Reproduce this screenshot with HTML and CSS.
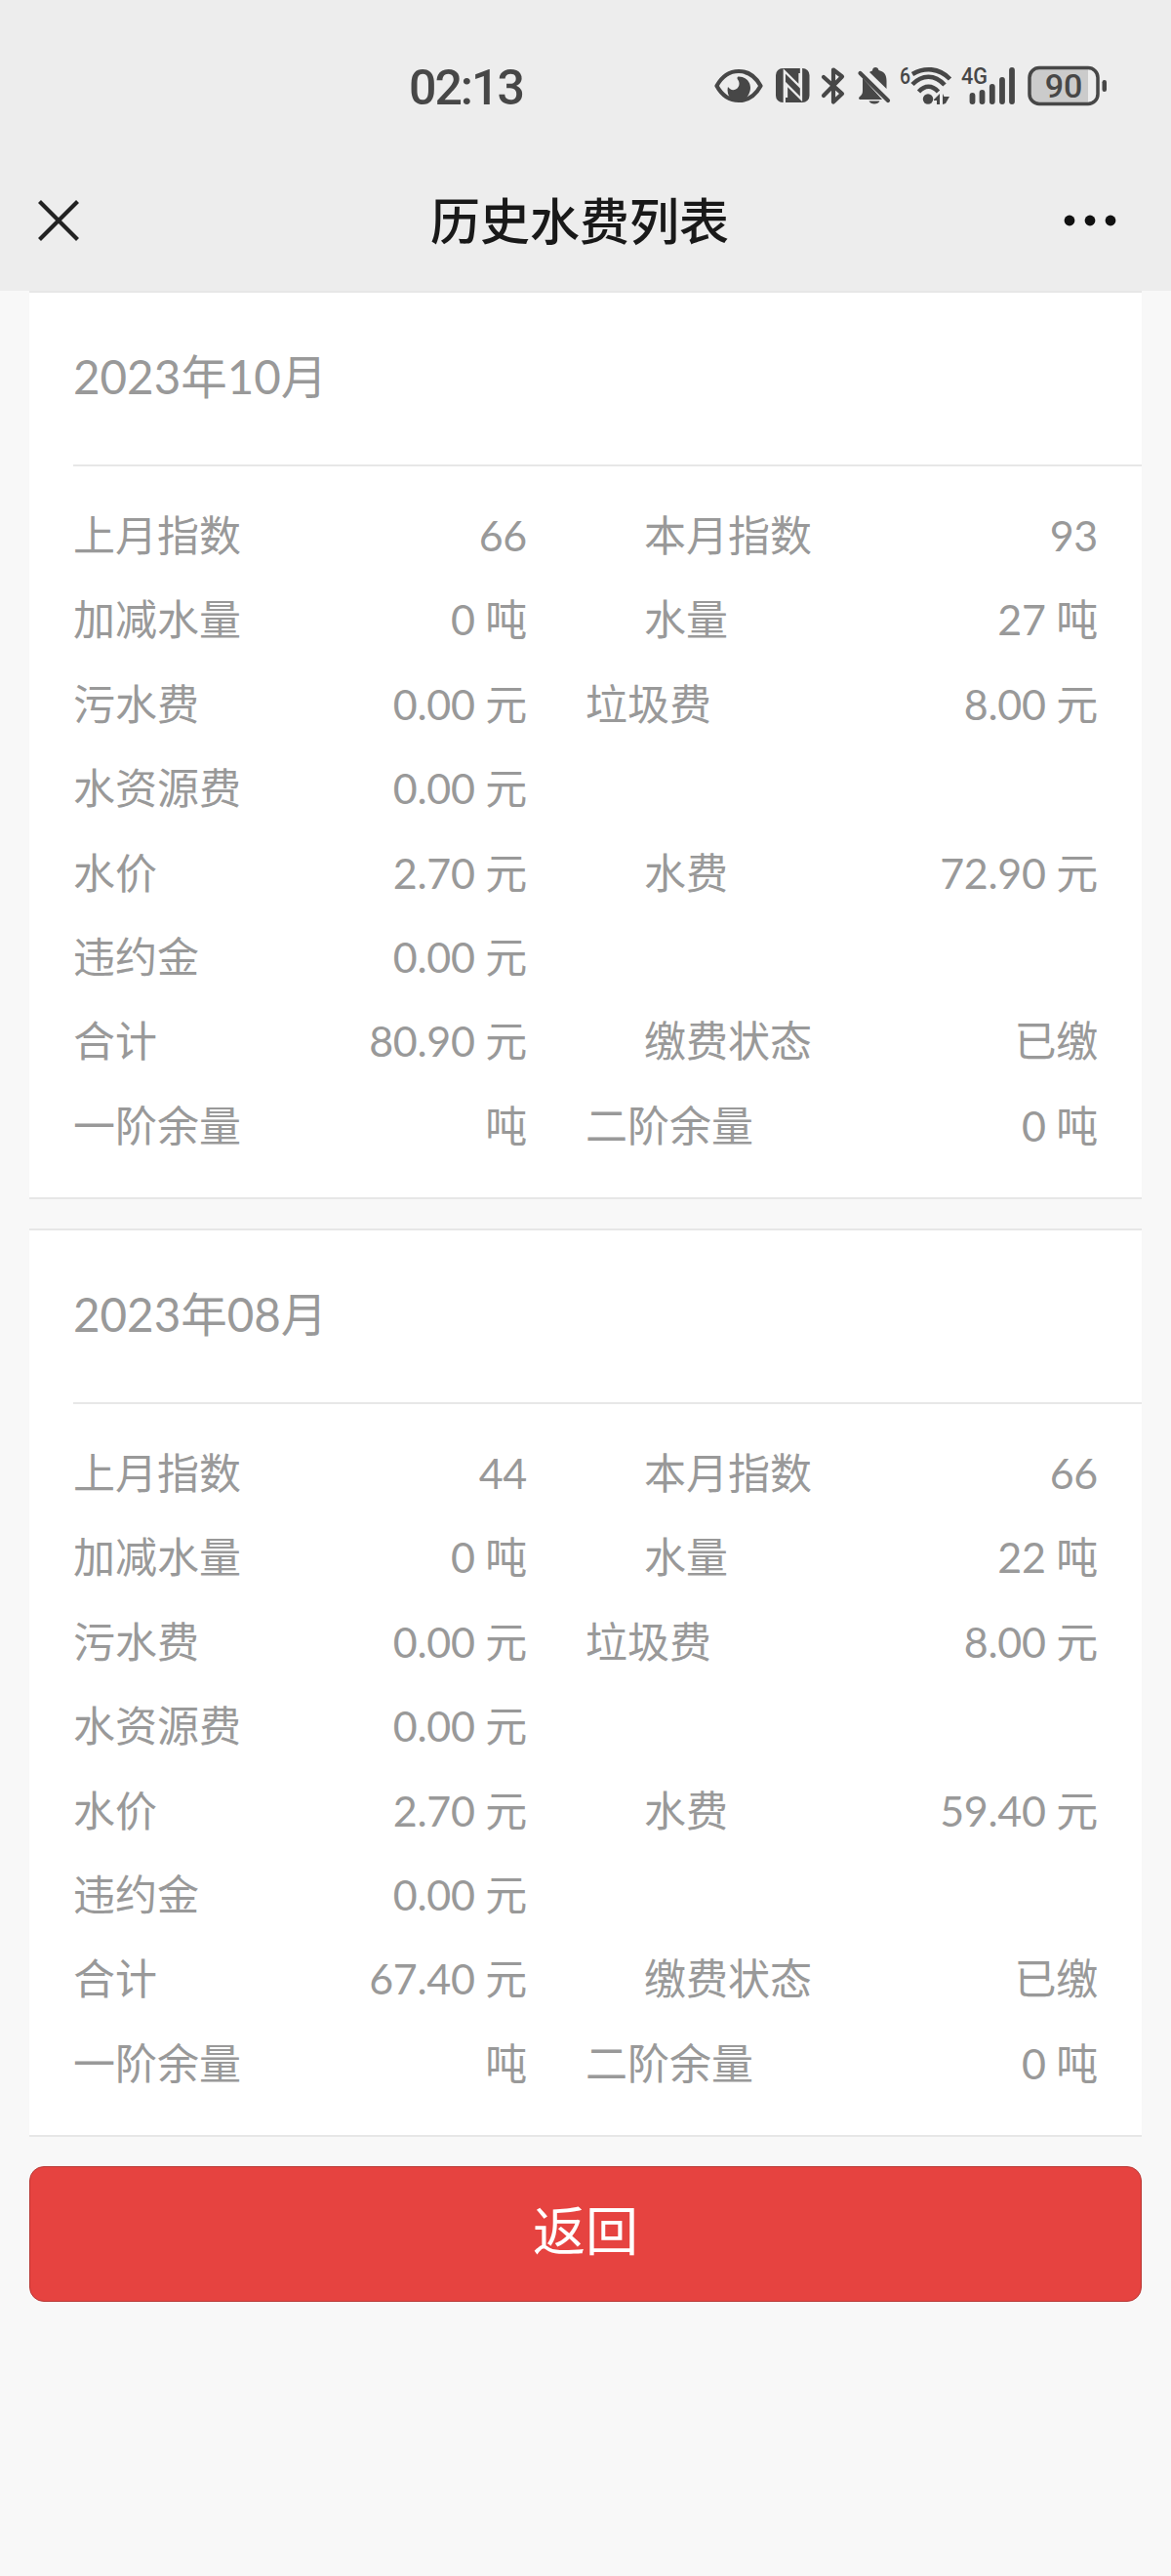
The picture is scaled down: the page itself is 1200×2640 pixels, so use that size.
FILE: index.html
```
<!DOCTYPE html>
<html lang="zh-CN">
<head>
	<meta charset="UTF-8">
	<title>历史水费列表</title>
	<link rel="stylesheet" href="styles.css">
</head>
<body>
	<div class="top">
		<div class="status">
			<span class="time">02:13</span>
			<div class="icons">
				<!-- eye -->
				<svg class="eye" width="50" height="44" viewBox="0 0 50 44">
					<path d="M2.500 22C8 12 16 7 25 7s17 5 22.500 15C42 32 34 37 25 37S8 32 2.500 22z" fill="none" stroke="#474747" stroke-width="4.200" stroke-linejoin="round"/>
					<path d="M25 12.500c7 0 12 5 12 11.500 0 5-3 9-6 13H19c-4-3-6.500-8-5-14 2 3 5 4 8 2.500 4-2 4.500-7 2-10-1-1.500-.500-3 1-3z" fill="#474747"/>
				</svg>
				<!-- nfc -->
				<svg class="nfc" width="35" height="44" viewBox="0 0 35 44">
					<rect x="0" y="4" width="34.500" height="35" rx="7" fill="#474747"/>
					<path d="M8.800 39V7L24.500 22.500V9" fill="none" stroke="#ededed" stroke-width="2.300"/>
					<path d="M26 4v31.500L11 20.500V34" fill="none" stroke="#ededed" stroke-width="2.300"/>
				</svg>
				<!-- bluetooth -->
				<svg class="bt" width="26" height="44" viewBox="0 0 26 44">
					<path d="M3 13l19 17-9 8.500V5.500l9 7L3 32" fill="none" stroke="#474747" stroke-width="4.200" stroke-linejoin="round" stroke-linecap="round"/>
				</svg>
				<!-- bell off -->
				<svg class="bell" width="34" height="44" viewBox="0 0 34 44">
					<path d="M5 14L25 36H2c-1.500-1-1-2 0-3 2-1.500 3-3 3-6zM12 8c1-1 2-1 3-1.500C15 2 21 2 21.500 6c6 1.500 8 5 8 11v8z" fill="#474747"/>
					<path d="M2.500 9L31 37" stroke="#474747" stroke-width="4.200" stroke-linecap="round"/>
					<path d="M11.500 37.500h11c-1.500 4-9.500 4-11 0z" fill="#474747"/>
				</svg>
				<!-- wifi 6 -->
				<svg class="wifi" width="54" height="44" viewBox="0 0 54 44">
					<text class="small" x="0" y="20" textLength="11" lengthAdjust="spacingAndGlyphs">6</text>
					<g fill="none" stroke="#474747" stroke-width="4.600">
						<path d="M13 10C25 3 40 3 51.500 15"/>
						<path d="M13 20.500C23 10 36 10 46 21"/>
						<path d="M19.500 28C26 21 33 21 39.500 28"/>
					</g>
					<circle cx="29" cy="35.500" r="5.200" fill="#474747"/>
					<path d="M35 36l6-6v11h-3v-4h-3zM44 41V30l1.500 3H51l-4 7z" fill="#474747"/>
				</svg>
				<!-- 4g signal -->
				<svg class="signal" width="56" height="44" viewBox="0 0 56 44">
					<text class="small" x="0" y="20" textLength="27" lengthAdjust="spacingAndGlyphs">4G</text>
					<g stroke="#474747" stroke-width="5.800" stroke-linecap="round">
						<path d="M11.500 32v6M21.500 29v9M31.800 23v15M42 16v22M52 6v32"/>
					</g>
				</svg>
				<!-- battery -->
				<svg class="battery" width="82" height="44" viewBox="0 0 82 44">
					<path d="M12 3.500h50v37H12a10 10 0 0 1-10-10v-17a10 10 0 0 1 10-10z" fill="#cbcbcb"/>
					<rect x="2" y="3.500" width="70" height="37" rx="10" fill="none" stroke="#474747" stroke-width="3.500"/>
					<rect x="76.500" y="16" width="4.500" height="12" rx="2.200" fill="#474747"/>
					<text class="percent" x="37" y="34" text-anchor="middle">90</text>
				</svg>
			</div>
		</div>
		<div class="nav">
			<svg class="close" width="44" height="44" viewBox="0 0 44 44">
				<path d="M2.500 2.500l39 39M41.500 2.500l-39 39" stroke="#222" stroke-width="4.200"/>
			</svg>
			<h1>历史水费列表</h1>
			<svg class="more" width="54" height="12" viewBox="0 0 54 12">
				<circle cx="6" cy="6" r="5.400"/>
				<circle cx="27" cy="6" r="5.400"/>
				<circle cx="48" cy="6" r="5.400"/>
			</svg>
		</div>
	</div>

	<div class="list">
		<div class="card">
			<h2>2023年10月</h2>
			<div class="rows">
				<p class="left"><label>上月指数</label><span>66</span></p>
				<p class="indent"><label>本月指数</label><span>93</span></p>
				<p class="left"><label>加减水量</label><span>0 吨</span></p>
				<p class="indent"><label>水量</label><span>27 吨</span></p>
				<p class="left"><label>污水费</label><span>0.00 元</span></p>
				<p><label>垃圾费</label><span>8.00 元</span></p>
				<p class="left"><label>水资源费</label><span>0.00 元</span></p>
				<p class="left"><label>水价</label><span>2.70 元</span></p>
				<p class="indent"><label>水费</label><span>72.90 元</span></p>
				<p class="left"><label>违约金</label><span>0.00 元</span></p>
				<p class="left"><label>合计</label><span>80.90 元</span></p>
				<p class="indent"><label>缴费状态</label><span>已缴</span></p>
				<p class="left"><label>一阶余量</label><span>吨</span></p>
				<p><label>二阶余量</label><span>0 吨</span></p>
			</div>
		</div>
		<div class="card">
			<h2>2023年08月</h2>
			<div class="rows">
				<p class="left"><label>上月指数</label><span>44</span></p>
				<p class="indent"><label>本月指数</label><span>66</span></p>
				<p class="left"><label>加减水量</label><span>0 吨</span></p>
				<p class="indent"><label>水量</label><span>22 吨</span></p>
				<p class="left"><label>污水费</label><span>0.00 元</span></p>
				<p><label>垃圾费</label><span>8.00 元</span></p>
				<p class="left"><label>水资源费</label><span>0.00 元</span></p>
				<p class="left"><label>水价</label><span>2.70 元</span></p>
				<p class="indent"><label>水费</label><span>59.40 元</span></p>
				<p class="left"><label>违约金</label><span>0.00 元</span></p>
				<p class="left"><label>合计</label><span>67.40 元</span></p>
				<p class="indent"><label>缴费状态</label><span>已缴</span></p>
				<p class="left"><label>一阶余量</label><span>吨</span></p>
				<p><label>二阶余量</label><span>0 吨</span></p>
			</div>
		</div>
		<button class="back">返回</button>
	</div>
</body>
</html>
```
FILE: styles.css
```
*{
	box-sizing: border-box;
	margin: 0;
	padding: 0;
}

body{
	min-height: 2640px;
	background-color: #f8f8f8;
	font-family: Lato, "Noto Sans CJK SC", sans-serif;
	color: #999;
}

.top{
	height: 298px;
	background-color: #ededed;
}

.status{
	display: flex;
	align-items: center;
	height: 154px;
	padding: 22px 65px 0 419px;
	justify-content: space-between;
}

.time{
	font-family: Roboto, sans-serif;
	font-size: 50px;
	font-weight: 500;
	letter-spacing: -2px;
	padding-top: 4px;
	color: #474747;
}

.icons{
	display: flex;
}

.icons svg{
	display: block;
	overflow: visible;
}

.nfc{
	margin-left: 13px;
}

.bt{
	margin-left: 11px;
}

.bell{
	margin-left: 12px;
}

.wifi{
	margin-left: 9px;
}

.signal{
	margin-left: 9px;
}

.battery{
	margin-left: 12px;
}

.small{
	font-family: Roboto, sans-serif;
	font-size: 24px;
	font-weight: 500;
	fill: #474747;
}

.percent{
	font-family: Roboto, sans-serif;
	font-size: 34px;
	font-weight: 500;
	fill: #474747;
}

.nav{
	display: flex;
	align-items: center;
	justify-content: space-between;
	height: 144px;
	padding: 0 56px 0 38px;
}

.nav h1{
	font-size: 51px;
	font-weight: 500;
	line-height: 72px;
	color: #191919;
	padding: 2px 0 0 16px;
}

.more{
	fill: #111;
}

.list{
	padding: 0 30px;
}

.card{
	height: 931px;
	margin-bottom: 30px;
	background-color: #fff;
	border-top: 2px solid #e7e7e7;
	border-bottom: 2px solid #e7e7e7;
}

.card h2{
	height: 178px;
	margin-left: 45px;
	border-bottom: 2px solid #e7e7e7;
	font-size: 47.500px;
	font-weight: 400;
	line-height: 172px;
}

.rows{
	display: grid;
	grid-template-columns: 465px 525px;
	column-gap: 60px;
	grid-auto-rows: 86.400px;
	padding: 28px 45px 0;
	font-size: 43px;
	line-height: 86.400px;
}

.rows p{
	display: flex;
	justify-content: space-between;
}

.rows .indent{
	padding-left: 60px;
}

.rows .left{
	grid-column: 1;
}

.rows span{
	letter-spacing: -.300px;
}

.back{
	display: block;
	width: 100%;
	height: 139px;
	padding-bottom: 12px;
	border: 1px solid #b83633;
	border-radius: 15px;
	background-color: #e64340;
	font-family: "Noto Sans CJK SC", sans-serif;
	font-size: 54px;
	line-height: 126px;
	color: #fff;
}
```
